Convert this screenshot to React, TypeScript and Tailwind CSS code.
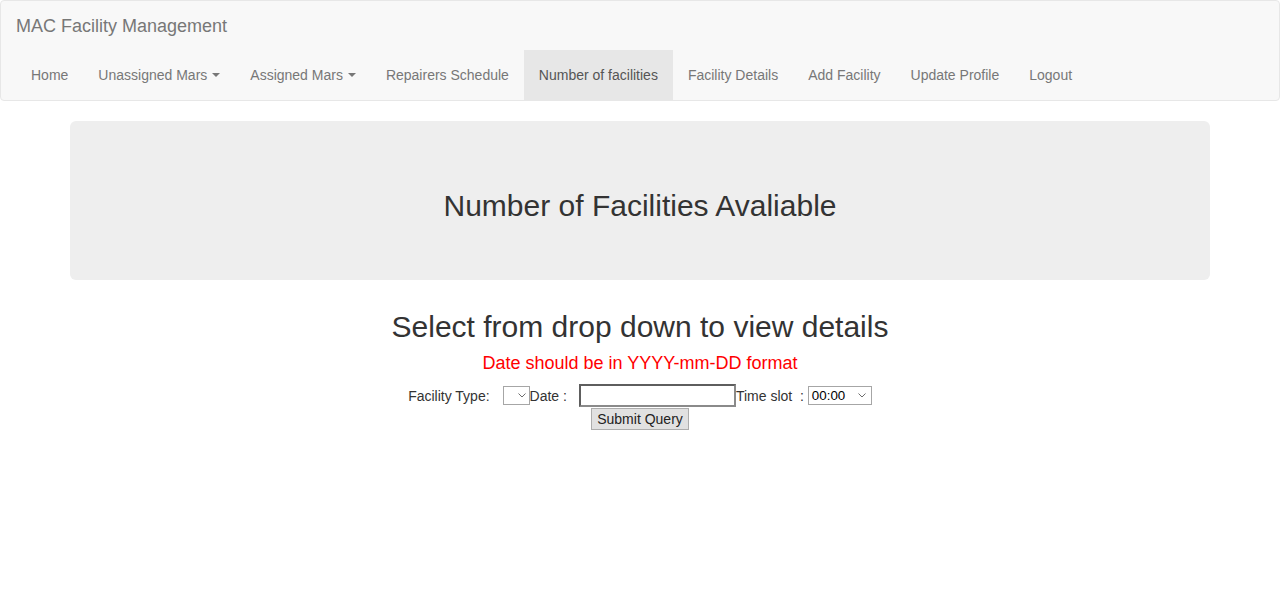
import React from 'react';

const NAV = [
  { label: 'Home' },
  { label: 'Unassigned Mars', caret: true },
  { label: 'Assigned Mars', caret: true },
  { label: 'Repairers Schedule' },
  { label: 'Number of facilities', active: true },
  { label: 'Facility Details' },
  { label: 'Add Facility' },
  { label: 'Update Profile' },
  { label: 'Logout' },
];

function Chevron() {
  return (
    <svg width="8" height="5" viewBox="0 0 8 5" fill="none" stroke="#6d6d6d" strokeWidth="1">
      <path d="M0.5 0.5 4 4 7.5 0.5" />
    </svg>
  );
}

export default function App() {
  return (
    <div className="min-h-[610px] bg-white text-[14px] leading-[20px] text-[#333]" style={{ fontFamily: '"Liberation Sans", Arial, sans-serif' }}>
      {/* Navbar */}
      <nav className="mb-[20px] rounded-[4px] border border-[#e7e7e7] bg-[#f8f8f8]">
        <div className="flex h-[49px] items-center px-[15px] pt-[1px] text-[18px] leading-[20px] text-[#777]">
          MAC Facility Management
        </div>
        <ul className="flex px-[15px]">
          {NAV.map((item) => (
            <li key={item.label}>
              <a
                className={
                  'flex h-[50px] items-center px-[15px] ' +
                  (item.active ? 'bg-[#e7e7e7] text-[#555]' : 'text-[#777]')
                }
              >
                {item.label}
                {item.caret && (
                  <span className="ml-[5px] inline-block h-0 w-0 border-x-[4px] border-t-[4px] border-x-transparent border-t-[#777]" />
                )}
              </a>
            </li>
          ))}
        </ul>
      </nav>

      <div className="mx-auto w-[1170px] px-[15px]">
        {/* Jumbotron */}
        <div className="mb-[30px] rounded-[6px] bg-[#eee] py-[48px] text-center">
          <h2 className="mt-[20px] mb-[10px] text-[30px] leading-[33px] font-normal">Number of Facilities Avaliable</h2>
        </div>

        <div className="text-center">
          <h2 className="mb-[8px] text-[30px] leading-[33px] font-normal">Select from drop down to view details</h2>
          <div className="text-[18px] leading-[25px] text-[#f00]">Date should be in YYYY-mm-DD format</div>

          <form className="mt-[8px] flex flex-col items-center">
            <div className="flex h-[23px] items-center">
              <span>Facility Type:</span>
              <div className="ml-[13px] flex h-[19px] w-[27px] items-center justify-end border border-[#a6a6a6] bg-white pr-[3px]">
                <Chevron />
              </div>
              <span>Date :</span>
              <input type="text" className="ml-[12px] h-[23px] w-[157px] border-2 border-t-[#5e5e5e] border-l-[#5e5e5e] border-b-[#8a8a8a] border-r-[#8a8a8a] bg-white px-[2px] text-[13px] outline-none" />
              <span className="whitespace-pre">Time slot  :</span>
              <div className="ml-[4px] flex h-[19px] w-[64px] items-center justify-between border border-[#a6a6a6] bg-white pl-[3px] pr-[5px] text-[13.33px] leading-[17px] text-black">
                <span>00:00</span>
                <Chevron />
              </div>
            </div>
            <button type="button" className="mt-[1px] h-[22px] w-[98px] border border-[#adadad] bg-[#e1e1e1] text-[14px] leading-[20px] text-[#222]">
              Submit Query
            </button>
          </form>
        </div>
      </div>
    </div>
  );
}
